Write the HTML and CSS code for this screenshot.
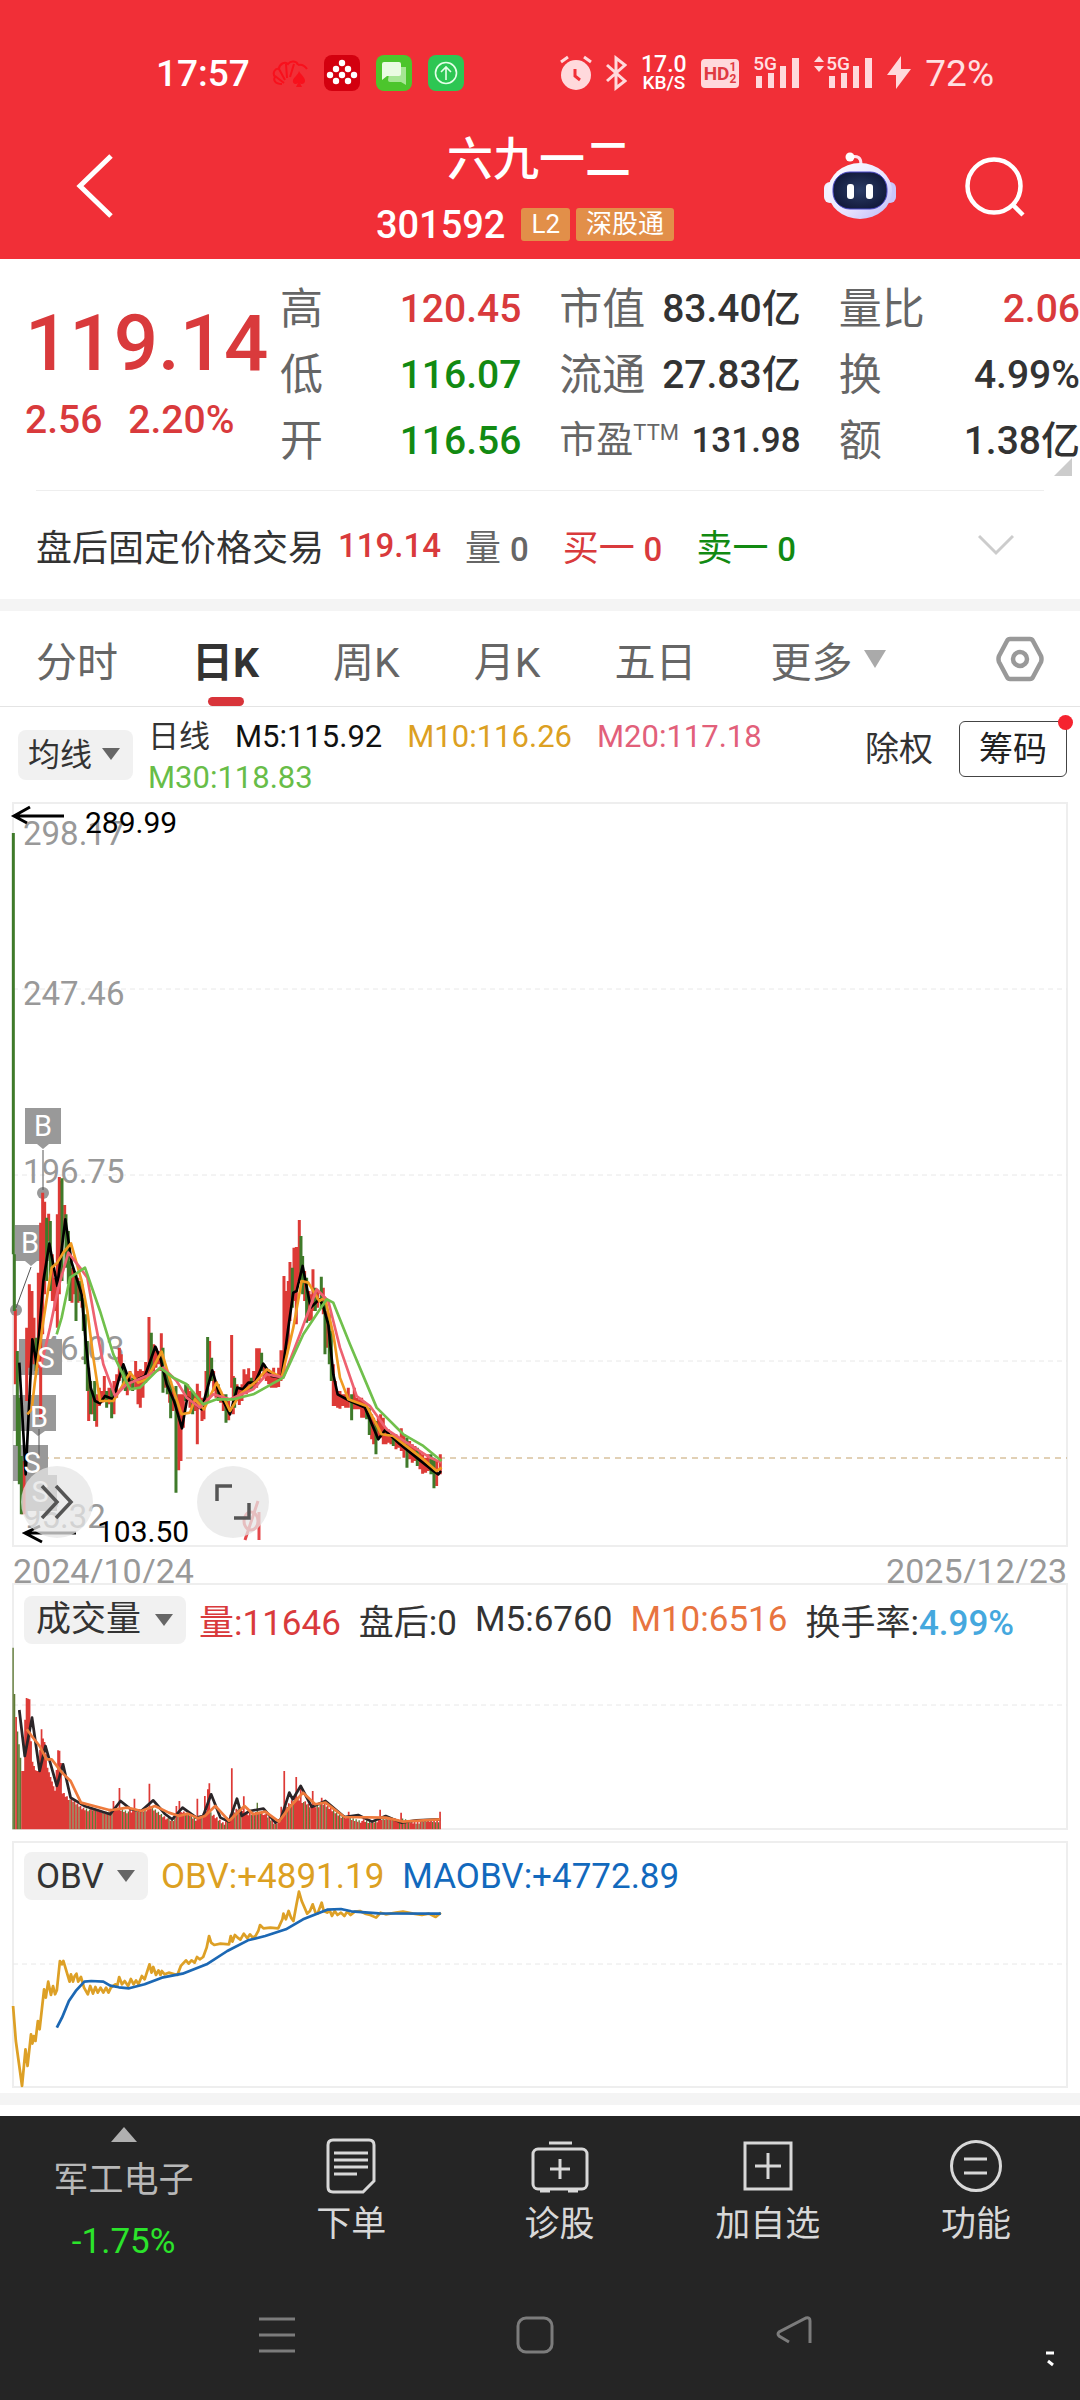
FILE: index.html
```html
<!DOCTYPE html>
<html lang="zh-CN">
<head>
    <meta charset="UTF-8">
    <meta name="viewport" content="width=device-width, initial-scale=1.0">
    <title>六九一二 301592</title>
    <link rel="stylesheet" href="styles.css">
</head>
<body>
    <div class="top">
        <div class="status-bar">
            <div class="status-left">
                <span class="clock">17:57</span>
                <svg width="36" height="36" viewBox="0 0 36 36" fill="none" stroke="#f8101c" stroke-width="2">
                    <path d="M10 29C3 29 1 25 3 22C0 18 3 13 7 14C7 9 13 6 16 9C19 5 25 6 26 10M12 28L3 21M13 25L7 14M15 23L14 9M18 22L22 9M26 10C30 9 33 11 35 14"/>
                    <path d="M27 16C29 20 33 22 33 26C33 29 29 30 28 28L30 32H24L26 28C24 30 20 29 21 25C22 22 26 20 27 16Z" fill="#f8101c" stroke="none"/>
                </svg>
                <svg width="36" height="36" viewBox="0 0 36 36">
                    <rect width="36" height="36" rx="8" fill="#d3000f"/>
                    <g fill="#fff">
                        <circle cx="18" cy="8" r="3.2"/><circle cx="12" cy="14" r="3.2"/><circle cx="24" cy="14" r="3.2"/>
                        <circle cx="6" cy="20" r="3.2"/><circle cx="18" cy="20" r="3.2"/><circle cx="30" cy="20" r="3.2"/>
                        <circle cx="12" cy="26" r="3.2"/><circle cx="24" cy="26" r="3.2"/>
                    </g>
                </svg>
                <svg width="36" height="36" viewBox="0 0 36 36">
                    <rect width="36" height="36" rx="8" fill="#4cc52c"/>
                    <path d="M14 12h16v18l-5-3H14a2 2 0 0 1-2-2z" fill="#a6e694"/>
                    <path d="M8 7h15a2 2 0 0 1 2 2v10a2 2 0 0 1-2 2H11l-5 4V9a2 2 0 0 1 2-2z" fill="#e9fbe2"/>
                </svg>
                <svg width="36" height="36" viewBox="0 0 36 36" fill="none" stroke="#e4ffe9" stroke-width="1.6">
                    <rect width="36" height="36" rx="8" fill="#2dc653" stroke="none"/>
                    <circle cx="18" cy="18" r="10.5"/>
                    <path d="M18 25V12M13 17l5-5 5 5"/>
                </svg>
            </div>
            <div class="status-right">
                <svg width="32" height="36" viewBox="0 0 32 36">
                    <circle cx="16" cy="20" r="15" fill="#ffd9dc"/>
                    <path d="M1 7L8 2M31 7L24 2" stroke="#ffd9dc" stroke-width="3"/>
                    <path d="M15 14v7l5 4" stroke="#f12f37" stroke-width="3" fill="none"/>
                </svg>
                <svg width="21" height="36" viewBox="0 0 21 36" fill="none" stroke="#ffd9dc" stroke-width="3">
                    <path d="M1 10L19 26L10 33V3L19 10L1 26"/>
                </svg>
                <span class="net-speed"><b>17.0</b><i>KB/S</i></span>
                <span class="hd">HD<span class="hd-num"><i>1</i><i>2</i></span></span>
                <span class="signal">
                    <span class="net-type">5G</span>
                    <svg width="44" height="34" viewBox="0 0 44 34" fill="#ffd9dc"><path d="M0 20h6v12H0zM12 17h6v15h-6zM24 10h6v22h-6zM36 2h7v30h-7z"/></svg>
                </span>
                <span class="signal signal-data">
                    <svg class="updown" width="10" height="16" viewBox="0 0 10 16" fill="#ffd9dc"><path d="M0 6l5-6 5 6zM0 10h10l-5 6z"/></svg>
                    <span class="net-type">5G</span>
                    <svg width="44" height="34" viewBox="0 0 44 34" fill="#ffd9dc"><path d="M0 20h6v12H0zM12 17h6v15h-6zM24 10h6v22h-6zM36 2h7v30h-7z"/></svg>
                </span>
                <svg width="24" height="34" viewBox="0 0 24 34"><path d="M14 0L0 19H9V33L24 13H14Z" fill="#ffd9dc"/></svg>
                <span class="battery">72%</span>
            </div>
        </div>

        <div class="header">
            <button class="icon-btn back" aria-label="返回">
                <svg width="38" height="66" viewBox="0 0 38 66" fill="none" stroke="#fff" stroke-width="5"><path d="M35 3L4 33L35 63"/></svg>
            </button>
            <div class="header-title">
                <h1>六九一二</h1>
                <div class="code-row">
                    <span class="code">301592</span>
                    <span class="badge">L2</span>
                    <span class="badge">深股通</span>
                </div>
            </div>
            <div class="header-actions">
                <button class="icon-btn" aria-label="助手">
                    <svg width="72" height="68" viewBox="0 0 72 68">
                        <defs>
                            <linearGradient id="shell" x1="0" y1="0" x2="1" y2="1"><stop offset="0" stop-color="#fff"/><stop offset=".6" stop-color="#e6e2ff"/><stop offset="1" stop-color="#b9b6f5"/></linearGradient>
                            <radialGradient id="face"><stop offset="0" stop-color="#2c3c66"/><stop offset="1" stop-color="#141c3e"/></radialGradient>
                        </defs>
                        <path d="M26 5C34 3 37 6 37 12" fill="none" stroke="#ffe1ee" stroke-width="3"/>
                        <circle cx="26" cy="5" r="4.5" fill="#fff"/>
                        <rect x="0" y="30" width="12" height="21" rx="6" fill="#f3f0ff"/>
                        <rect x="60" y="30" width="12" height="21" rx="6" fill="#c9c6fb"/>
                        <ellipse cx="36" cy="39" rx="32" ry="28" fill="url(#shell)"/>
                        <rect x="9" y="20" width="54" height="37" rx="17" fill="url(#face)" stroke="#4b48c8" stroke-width="1"/>
                        <rect x="23" y="32" width="7" height="15" rx="3" fill="#fff"/>
                        <rect x="42" y="32" width="7" height="15" rx="3" fill="#fff"/>
                    </svg>
                </button>
                <button class="icon-btn" aria-label="搜索">
                    <svg width="62" height="62" viewBox="0 0 62 62" fill="none" stroke="#fff" stroke-width="4.5"><circle cx="30" cy="31" r="26.500"/><path d="M48 49L59 60"/></svg>
                </button>
            </div>
        </div>
    </div>

    <div class="quote">
        <div class="quote-main">
            <div class="price up">119.14</div>
            <div class="change up"><span>2.56</span><span>2.20%</span></div>
        </div>
        <div class="quote-grid">
            <div class="cell"><span>高</span><b class="up">120.45</b></div>
            <div class="cell"><span>市值</span><b>83.40亿</b></div>
            <div class="cell"><span>量比</span><b class="up">2.06</b></div>
            <div class="cell"><span>低</span><b class="down">116.07</b></div>
            <div class="cell"><span>流通</span><b>27.83亿</b></div>
            <div class="cell"><span>换</span><b>4.99%</b></div>
            <div class="cell"><span>开</span><b class="down">116.56</b></div>
            <div class="cell cell-small"><span>市盈<sup>TTM</sup></span><b>131.98</b></div>
            <div class="cell"><span>额</span><b>1.38亿</b></div>
        </div>
        <span class="corner"></span>
    </div>

    <div class="fixed-price">
        <span>盘后固定价格交易</span>
        <b class="up">119.14</b>
        <span class="muted">量 <b>0</b></span>
        <span class="up">买一 <b>0</b></span>
        <span class="down">卖一 <b>0</b></span>
        <button class="icon-btn expand" aria-label="展开">
            <svg width="36" height="22" viewBox="0 0 36 22" fill="none" stroke="#ccc" stroke-width="3"><path d="M1 2L18 19L35 2"/></svg>
        </button>
    </div>

    <div class="band"></div>

    <div class="tabs">
        <button class="tab">分时</button>
        <button class="tab active">日K</button>
        <button class="tab">周K</button>
        <button class="tab">月K</button>
        <button class="tab">五日</button>
        <button class="tab tab-more">更多</button>
        <button class="icon-btn settings" aria-label="设置">
            <svg width="48" height="46" viewBox="0 0 48 46" fill="none" stroke="#999" stroke-width="4.500" stroke-linejoin="round"><path d="M14 3H34Q36 3 37 5L45 20Q46 23 45 26L37 41Q36 43 34 43H14Q12 43 11 41L3 26Q2 23 3 20L11 5Q12 3 14 3Z"/><circle cx="24" cy="23" r="7"/></svg>
        </button>
    </div>

    <div class="ma-bar">
        <label class="dropdown"><select aria-label="主图指标"><option>均线</option></select></label>
        <div class="ma-values">
            <span class="ma-name">日线</span>
            <span class="ma5">M5:115.92</span>
            <span class="ma10">M10:116.26</span>
            <span class="ma20">M20:117.18</span>
            <span class="ma30">M30:118.83</span>
        </div>
        <div class="ma-actions">
            <button class="text-btn">除权</button>
            <button class="chips-btn">筹码</button>
        </div>
    </div>

    <div class="panel panel-main">
        <svg class="chart" viewBox="1 0 1052 741">
            <g class="grid-lines">
                <path d="M0 185H1054M0 371H1054M0 557H1054"/>
            </g>
            <path class="last-line" d="M30 654H1054"/>
            <g class="tags">
                <path d="M12 304h36v36H36l-6 5-6-5H12zM2 421h34v36H24l-6 5-6-5H2zM6 535h43v36H6zM0 591h43v36H32l-7 5-6-5H0zM0 641h35v36H18l-6 5-6-5H0zM9 671h35v36H9z"/>
                <circle cx="30" cy="389" r="6"/>
                <circle cx="3" cy="506" r="6"/>
                <path class="tag-stem" d="M30 346V386M18 463L3 504M26 625V652"/>
            </g>
            <g class="axis-text">
                <text x="10" y="41">298.17</text>
                <text x="10" y="201">247.46</text>
                <text x="10" y="379">196.75</text>
                <text x="10" y="556">146.03</text>
                <text x="10" y="724">95.32</text>
            </g>
            <g id="candles" transform="translate(-13 277) scale(.3333)"></g>
            <g class="tag-text">
                <text x="30" y="332">B</text>
                <text x="17" y="449">B</text>
                <text x="33" y="564">S</text>
                <text x="26" y="623">B</text>
                <text x="19" y="669">S</text>
                <text x="27" y="698">S</text>
            </g>
            <g class="extremes">
                <path d="M51 12H1M17 3L1 12L14 19"/>
                <path d="M63 729H12M27 722L12 729L29 738"/>
                <text x="72" y="29">289.99</text>
                <text x="84" y="738">103.50</text>
            </g>
            <g fill="none" stroke="#e5484c" stroke-width="3">
                <path d="M246 708V736"/>
                <ellipse cx="238" cy="717" rx="7" ry="9"/>
                <path d="M232 736L245 697"/>
            </g>
        </svg>
        <button class="round-btn btn-forward" aria-label="前进">
            <svg width="34" height="36" viewBox="0 0 34 36" fill="none" stroke="#555" stroke-width="3.500"><path d="M2 2L17 18L2 34M16 2L31 18L16 34"/></svg>
        </button>
        <button class="round-btn btn-full" aria-label="全屏">
            <svg width="36" height="36" viewBox="0 0 36 36" fill="none" stroke="#555" stroke-width="3.500"><path d="M2 17V2H17M34 19V34H19"/></svg>
        </button>
    </div>

    <div class="dates"><span>2024/10/24</span><span>2025/12/23</span></div>

    <div class="panel panel-volume">
        <svg class="chart" viewBox="1 0 1052 243">
            <g class="grid-lines"><path d="M0 120H1054"/></g>
            <g id="volume" transform="translate(-13 -44) scale(.3444 .3333)"></g>
        </svg>
        <div class="toolbar">
            <label class="dropdown"><select aria-label="副图指标一"><option>成交量</option></select></label>
            <span class="up">量:11646</span>
            <span>盘后:0</span>
            <span>M5:6760</span>
            <span class="orange">M10:6516</span>
            <span>换手率:<b class="blue">4.99%</b></span>
        </div>
    </div>

    <div class="panel panel-obv">
        <svg class="chart" viewBox="1 0 1052 243">
            <g class="grid-lines"><path d="M0 121H1054"/></g>
            <g id="obv" transform="translate(-13 -22) scale(.3444 .3333)"></g>
        </svg>
        <div class="toolbar">
            <label class="dropdown"><select aria-label="副图指标二"><option>OBV</option></select></label>
            <span class="ma10">OBV:+4891.19</span>
            <span class="deep-blue">MAOBV:+4772.89</span>
        </div>
    </div>

    <div class="band"></div>

    <div class="footer">
        <div class="bottom-nav">
            <a class="nav-sector" href="#">
                <span class="tri"></span>
                <span>军工电子</span>
                <span class="sector-change">-1.75%</span>
            </a>
            <a class="nav-item" href="#">
                <svg width="50" height="56" viewBox="0 0 50 56" fill="none" stroke="#d8d8d8" stroke-width="3"><path d="M7 2H43Q48 2 48 7V43L37 54H7Q2 54 2 49V7Q2 2 7 2ZM8 15H42M8 22H42M8 29H42M8 36H31"/></svg>
                <span>下单</span>
            </a>
            <a class="nav-item" href="#">
                <svg width="58" height="56" viewBox="0 0 58 56" fill="none" stroke="#d8d8d8" stroke-width="3"><rect x="2" y="11" width="54" height="40" rx="5"/><path d="M18 5H41M29 21V41M19 31H39M9 53H19M37 53H47"/></svg>
                <span>诊股</span>
            </a>
            <a class="nav-item" href="#">
                <svg width="50" height="56" viewBox="0 0 50 56" fill="none" stroke="#d8d8d8" stroke-width="3"><path d="M2 5H48V51H2ZM25 15V41M12 28H38"/></svg>
                <span>加自选</span>
            </a>
            <a class="nav-item" href="#">
                <svg width="54" height="56" viewBox="0 0 54 56" fill="none" stroke="#d8d8d8" stroke-width="3"><circle cx="27" cy="28" r="24.500"/><path d="M15 21H38M15 35H38"/></svg>
                <span>功能</span>
            </a>
        </div>
        <div class="system-nav">
            <button class="icon-btn" aria-label="最近任务">
                <svg width="36" height="38" viewBox="0 0 36 38" stroke="#7c7c7c" stroke-width="3"><path d="M0 3H36M0 19H36M0 35H36"/></svg>
            </button>
            <button class="icon-btn" aria-label="主页">
                <svg width="38" height="38" viewBox="0 0 38 38" fill="none" stroke="#7c7c7c" stroke-width="3"><rect x="2" y="2" width="34" height="34" rx="8"/></svg>
            </button>
            <button class="icon-btn" aria-label="返回上一页">
                <svg width="38" height="38" viewBox="0 0 38 38" fill="none" stroke="#7c7c7c" stroke-width="3"><path d="M14 26L4 20Q2 18 4 16L31 2Q35 1 35 5V27"/></svg>
            </button>
            <svg class="marks" width="10" height="16" viewBox="0 0 10 16" stroke="#fff" stroke-width="3"><path d="M1 2H9M3 10L8 14"/></svg>
        </div>
    </div>

    <script src="script.js"></script>
</body>
</html>
```
FILE: styles.css
```css
* {
    margin: 0;
    padding: 0;
    box-sizing: border-box;
}

body {
    font-family: Roboto, "Noto Sans CJK SC", sans-serif;
    background: #fff;
    color: #333;
    font-size: 35px;
}

button,
select {
    font: inherit;
    color: inherit;
    background: none;
    border: none;
}

a {
    color: inherit;
    text-decoration: none;
}

i {
    font-style: normal;
}

b {
    font-weight: 500;
}

svg {
    display: block;
    flex: none;
}

.up { color: #d93a3c; }
.down { color: #128a12; }
.muted { color: #666; }
.orange { color: #e87440; }
.blue { color: #45a8de; }
.deep-blue { color: #1269bd; }
.ma5 { color: #111; }
.ma10 { color: #dca022; }
.ma20 { color: #e2607a; }
.ma30 { color: #68bd48; }

.icon-btn {
    display: flex;
}

/* header */
.top {
    background: #f12f37;
    color: #fff;
    padding-top: 48px;
}

.status-bar {
    display: flex;
    justify-content: space-between;
    align-items: center;
    height: 50px;
    padding: 0 86px 0 156px;
}

.status-left,
.status-right {
    display: flex;
    align-items: center;
    gap: 16px;
}

.status-right {
    gap: 14px;
    color: #ffe0e2;
}

.clock {
    font-size: 37px;
    font-weight: 500;
    margin-right: 6px;
}

.battery {
    font-size: 37px;
}

.net-speed {
    display: flex;
    flex-direction: column;
    align-items: center;
    font-size: 19px;
    font-weight: 500;
    line-height: 16px;
    color: #fff;
}

.net-speed b {
    font-size: 23px;
    line-height: 20px;
}

.hd {
    display: flex;
    align-items: center;
    height: 29px;
    padding: 0 3px;
    background: #ffd9dc;
    color: #e03a42;
    border-radius: 4px;
    font-size: 19px;
    font-weight: 700;
}

.hd-num {
    display: flex;
    flex-direction: column;
    font-size: 12px;
    line-height: 12px;
}

.signal {
    position: relative;
    padding-left: 3px;
}

.signal-data {
    padding-left: 15px;
}

.net-type {
    position: absolute;
    left: 0;
    top: 0;
    font-size: 19px;
    font-weight: 500;
    line-height: 16px;
}

.signal-data .net-type {
    left: 12px;
}

.updown {
    position: absolute;
    left: 0;
    top: 0;
}

.header {
    display: grid;
    grid-template-columns: 1fr auto 1fr;
    align-items: center;
    height: 161px;
    padding: 26px 54px 0 76px;
}

.back,
.header-actions {
    margin-bottom: 12px;
}

.header-title {
    text-align: center;
    margin-left: -24px;
}

.header-title h1 {
    font-size: 46px;
    font-weight: 500;
    line-height: 66px;
}

.code-row {
    display: flex;
    align-items: center;
    justify-content: center;
    gap: 6px;
    height: 66px;
    padding-right: 28px;
}

.code {
    font-size: 38px;
    font-weight: 500;
    margin-right: 10px;
}

.badge {
    height: 33px;
    padding: 0 10px;
    background: #e28f49;
    border-radius: 3px;
    font-size: 26px;
    line-height: 33px;
}

.header-actions {
    display: flex;
    align-items: center;
    justify-content: flex-end;
    gap: 68px;
}

/* quote */
.quote {
    position: relative;
    display: flex;
    padding: 17px 0 16px;
}

.quote-main {
    width: 280px;
    padding: 25px 0 0 25px;
}

.price {
    font-size: 78px;
    font-weight: 500;
    line-height: 86px;
}

.change {
    display: flex;
    gap: 26px;
    font-size: 39px;
    font-weight: 500;
    line-height: 66px;
}

.quote-grid {
    flex: 1;
    display: grid;
    grid-template-columns: repeat(3, 1fr);
    column-gap: 38px;
}

.cell {
    display: flex;
    justify-content: space-between;
    font-size: 39px;
    line-height: 66px;
    white-space: nowrap;
}

.cell span {
    color: #666;
    font-size: 43px;
}

.cell-small {
    font-size: 35px;
}

.cell-small span {
    font-size: 37px;
}

.cell sup {
    font-size: 22px;
    line-height: 22px;
}

.corner {
    position: absolute;
    right: 8px;
    bottom: 14px;
    border-left: 18px solid transparent;
    border-bottom: 18px solid #ccc;
}

.fixed-price {
    display: flex;
    align-items: center;
    height: 109px;
    margin: 0 36px;
    border-top: 1px solid #eee;
    font-size: 36px;
}

.fixed-price > * {
    margin-right: 34px;
}

.fixed-price > span:first-child {
    margin-right: 14px;
}

.fixed-price b {
    font-size: 33px;
}

.fixed-price > b {
    margin-right: 24px;
}

.fixed-price .expand {
    margin-left: auto;
    margin-right: 30px;
}

.band {
    height: 12px;
    background: #f4f4f4;
}

/* tabs */
.tabs {
    display: flex;
    align-items: center;
    gap: 74px;
    height: 96px;
    padding: 0 36px;
    border-bottom: 1px solid #e4e4e4;
    font-size: 41px;
}

.tab {
    position: relative;
    height: 95px;
    color: #666;
    white-space: nowrap;
}

.tab.active {
    color: #333;
    font-weight: 700;
}

.tab.active::after {
    content: "";
    position: absolute;
    left: 50%;
    bottom: 0;
    width: 36px;
    height: 9px;
    margin-left: -18px;
    border-radius: 5px;
    background: #d8343a;
}

.tab-more {
    display: flex;
    align-items: center;
    gap: 11px;
}

.tab-more::after {
    content: "";
    border: 11px solid transparent;
    border-top: 18px solid #aaa;
    border-bottom: none;
}

.settings {
    margin-left: auto;
}

/* moving averages */
.ma-bar {
    display: flex;
    align-items: center;
    height: 95px;
    padding: 0 13px 0 18px;
}

.dropdown {
    position: relative;
    background: #f1f1f1;
    border-radius: 8px;
    flex: none;
}

.dropdown::after {
    content: "";
    position: absolute;
    right: 13px;
    top: 18px;
    border: 9px solid transparent;
    border-top: 12px solid #666;
    border-bottom: none;
    pointer-events: none;
}

.dropdown select {
    display: block;
    appearance: none;
    height: 48px;
    padding: 0 44px 0 12px;
}

.ma-bar .dropdown select {
    height: 50px;
    padding: 0 40px 0 10px;
    font-size: 32px;
}

.ma-values {
    flex: 1;
    display: flex;
    flex-wrap: wrap;
    column-gap: 25px;
    margin-left: 15px;
    padding-top: 4px;
    font-size: 31px;
    line-height: 41px;
}

.ma-actions {
    display: flex;
    align-items: center;
    gap: 26px;
    padding-bottom: 12px;
    font-size: 34px;
    line-height: 50px;
}

.chips-btn {
    position: relative;
    width: 108px;
    height: 56px;
    border: 1px solid #444;
    border-radius: 6px;
    color: #222;
}

.chips-btn::after {
    content: "";
    position: absolute;
    top: -7px;
    right: -7px;
    width: 15px;
    height: 15px;
    border-radius: 50%;
    background: #f5232f;
}

/* charts */
.panel {
    position: relative;
    display: grid;
    margin: 0 12px;
    border: 2px solid #eee;
}

.chart {
    grid-area: 1 / 1;
    width: 100%;
    height: auto;
    overflow: visible;
}

.panel-volume,
.panel-obv {
    align-items: start;
}

.toolbar {
    grid-area: 1 / 1;
    display: flex;
    align-items: center;
    gap: 18px;
    padding: 9px 0 0 10px;
    white-space: nowrap;
}

.toolbar .dropdown {
    margin-right: -5px;
}

.grid-lines path {
    stroke: #e8e8e8;
    stroke-width: 1;
    stroke-dasharray: 5 4;
}

.last-line {
    stroke: #c4a26c;
    stroke-width: 1;
    stroke-dasharray: 6 5;
}

.tags {
    fill: #999;
}

.tag-stem {
    fill: none;
    stroke: #555;
    stroke-width: 1;
}

.axis-text {
    font-size: 33px;
    fill: #999;
}

.tag-text {
    font-size: 29px;
    fill: #fff;
    text-anchor: middle;
}

.extremes path {
    fill: none;
    stroke: #000;
    stroke-width: 3;
}

.extremes text {
    font-size: 30px;
    fill: #000;
}

.line {
    fill: none;
    stroke-width: 8;
    stroke-linejoin: round;
}

.round-btn {
    position: absolute;
    bottom: 7px;
    display: flex;
    align-items: center;
    justify-content: center;
    width: 72px;
    height: 72px;
    border-radius: 50%;
    background: rgba(230, 230, 230, 0.75);
}

.btn-forward {
    left: 7px;
}

.btn-full {
    left: 183px;
}

.dates {
    display: flex;
    justify-content: space-between;
    height: 36px;
    margin: 0 13px;
    font-size: 34px;
    line-height: 48px;
    color: #999;
}

.panel-volume {
    margin-bottom: 11px;
}

.panel-obv {
    margin-bottom: 5px;
}

/* footer */
.footer {
    margin-top: 11px;
    background: #252525;
    color: #d8d8d8;
}

.bottom-nav {
    display: grid;
    grid-template-columns: 247fr 208fr 208fr 208fr 208fr;
    height: 175px;
    font-size: 35px;
}

.nav-sector,
.nav-item {
    display: flex;
    flex-direction: column;
    align-items: center;
}

.nav-sector {
    padding-top: 11px;
    color: #b8b8b8;
    line-height: 61px;
}

.nav-sector .sector-change {
    color: #2be42b;
}

.tri {
    border: 13px solid transparent;
    border-bottom: 15px solid #b0b0b0;
    border-top: none;
    margin-bottom: 8px;
}

.nav-item {
    padding-top: 22px;
    line-height: 62px;
}

.system-nav {
    position: relative;
    display: flex;
    gap: 221px;
    height: 110px;
    padding: 25px 0 0 259px;
}

.marks {
    position: absolute;
    right: 25px;
    top: 60px;
}
```
FILE: script.js
```js
const RED = '#dd3a36';
const GREEN = '#3f7a2a';
const NS = 'http://www.w3.org/2000/svg';

// x high low, one entry per bar
const downBars = `40 -744 520,43 520 690,52 810 1095,58 950 1210,64 1125 1300,108 770 870,140 410 600,151 420 630,
186 292 600,198 400 560,205 450 610,210 540 660,228 580 720,240 600 660,250 650 750,256 700 850,262 780 930,272 900 1000,284 900 1020,
320 930 980,335 920 1012,370 860 920,376 870 930,398 890 930,454 755 880,489 800 935,502 880 940,512 900 1012,
528 915 1235,557 910 960,578 930 1000,623 768 950,635 830 900,655 910 960,678 940 1025,704 890 980,754 890 930,
785 815 870,877 560 680,903 465 600,908 525 640,920 590 725,946 620 690,964 587 680,975 660 820,988 700 850,
994 750 900,1055 940 1018,1100 970 1015,1108 980 1062,1128 1020 1120,1180 1060 1095,1221 1070 1160,1252 1100 1155,
1293 1120 1180,1302 1130 1222`;

const upBars = `46 685 910,72 1180 1300,68 1140 1300,80 740 960,88 610 860,96 630 830,102 710 850,115 575 860,122 425 1015,
128 335 760,134 362 640,146 398 480,157 520 660,165 590 690,172 400 740,178 288 640,182 300 560,194 372 440,216 560 665,222 570 640,
234 590 665,246 610 680,266 860 1020,278 930 1000,290 940 1037,298 920 975,306 930 965,313 885 960,327 920 970,
342 900 1000,350 880 950,358 800 900,364 820 890,382 880 943,390 870 920,407 840 920,414 870 970,421 865 980,
429 870 950,437 843 905,447 708 880,461 790 870,468 800 860,475 810 850,484 757 870,495 860 920,509 890 965,
519 920 990,536 940 1168,543 940 1140,550 940 1040,563 910 960,570 930 980,585 940 990,592 908 1090,599 930 980,
606 950 1020,612 960 1015,618 870 960,629 780 900,641 870 930,648 900 950,662 930 965,670 940 990,686 960 1018,
695 762 920,700 885 1000,711 910 960,718 920 972,726 910 960,732 865 930,739 880 940,746 862 930,761 870 920,770 802 920,778 802 900,
792 850 890,799 860 900,806 865 910,814 870 920,821 860 920,828 880 920,836 860 918,843 808 900,852 585 880,
860 630 820,865 600 800,870 543 720,882 500 660,889 498 730,898 417 600,914 570 660,927 630 720,934 640 718,
939 565 690,953 630 680,970 620 700,981 690 800,1000 850 975,1006 900 975,1013 930 980,1020 930 983,1028 940 975,
1037 940 980,1045 920 980,1063 920 985,1070 950 985,1078 955 985,1085 950 1010,1092 960 1010,1115 1000 1075,
1121 1010 1090,1135 1010 1075,1142 1000 1070,1150 1010 1090,1158 1040 1090,1165 1045 1085,1173 1060 1090,
1188 1060 1105,1195 1070 1100,1204 1042 1110,1212 1060 1130,1229 1080 1135,1237 1090 1145,1245 1095 1140,
1260 1110 1165,1268 1120 1178,1277 1130 1175,1285 1120 1170,1310 1140 1215,1321 1120 1180`;

const candleLines = [
    ['#000', '58 845,77 1180,97 775,110 850,130 600,148 488,172 615,196 415,215 545,245 640,258 790,272 920,285 960,300 967,315 945,340 955,358 890,370 850,390 905,435 885,466 797,482 835,500 910,522 960,546 1042,562 950,575 960,605 985,620 930,637 868,655 930,690 1000,712 920,728 925,745 905,765 905,790 848,815 885,845 890,865 740,880 635,890 630,908 555,932 680,958 655,968 670,985 730,1000 880,1013 940,1050 960,1095 980,1135 1075,1155 1048,1200 1090,1250 1130,1300 1170,1315 1180,1323 1170'],
    ['#f09a20', '82 1000,95 985,105 900,130 720,155 560,172 545,190 515,213 487,245 600,262 690,280 830,300 960,340 960,370 910,390 875,415 905,440 895,485 812,510 895,545 1000,570 995,585 955,612 985,650 905,690 990,720 940,770 900,800 865,845 890,880 740,905 600,925 605,958 660,975 650,1000 760,1020 890,1045 955,1100 975,1145 1060,1180 1065,1225 1100,1270 1135,1310 1170,1325 1160'],
    ['#ee6170', '122 860,150 740,175 620,205 515,240 560,262 590,285 720,310 850,345 945,380 910,440 885,490 860,530 900,560 950,600 980,640 940,690 955,760 925,800 880,850 890,900 760,950 625,985 660,1020 800,1070 945,1110 975,1160 1045,1220 1085,1290 1130,1325 1145'],
    ['#70c04c', '170 760,185 710,210 590,255 560,300 690,340 820,390 925,420 920,480 860,520 890,560 910,610 970,650 955,700 955,760 940,850 890,910 760,980 655,1000 665,1050 790,1130 980,1210 1060,1270 1095,1325 1140']
];

const volumeTops = '38 320,43 480,48 545,56 615,64 690,70 690,74 470,86 475,92 655,104 690,114 690,119 552,124 590,130 605,138 680,160 750,168 628,176 630,180 750,205 775,240 800,310 812,340 800,380 812,440 800,500 840,530 808,570 835,600 808,650 845,690 800,720 820,760 810,800 848,830 800,860 765,900 795,940 790,1000 828,1070 842,1130 830,1200 842,1282 835';
const volumeSpikes = { 330: 780, 346: 741, 392: 773, 433: 728, 512: 795, 521: 780, 573: 773, 595: 765, 603: 745, 608: 727, 673: 682, 708: 766, 747: 785, 817: 797, 825: 690, 860: 708, 872: 740, 908: 750, 933: 770, 1012: 812, 1104: 806, 1165: 815, 1279: 812 };

const volumeLines = [
    ['#2b2528', '56 507,72 645,93 530,115 690,132 615,165 735,183 670,205 770,245 795,320 820,350 780,380 805,410 810,445 778,480 820,500 835,530 800,570 830,590 825,613 760,640 830,665 842,688 773,702 825,725 810,765 803,800 845,815 835,840 755,850 775,873 735,905 798,945 780,1000 828,1040 822,1080 842,1120 825,1165 845,1210 838,1278 835'],
    ['#ee7a3c', '78 565,92 585,115 615,135 655,150 655,180 695,205 720,235 785,320 808,370 800,410 810,450 795,490 815,520 825,545 818,575 832,595 825,625 795,665 840,710 795,735 820,770 812,810 842,840 800,880 755,915 790,945 785,1000 828,1120 830,1170 842,1278 835']
];

const obvLines = [
    ['#dda026', '38 555,46 660,64 795,74 685,80 735,90 640,94 668,98 645,103 660,110 600,115 625,128 505,133 530,140 482,148 522,154 495,160 520,165 508,174 420,180 430,184 420,202 482,206 460,212 482,217 465,222 458,227 482,235 468,244 500,255 520,262 495,270 518,277 498,284 515,292 500,300 515,308 500,315 515,322 500,335 490,341 492,346 468,354 490,362 480,372 495,380 474,388 490,395 478,402 490,412 465,420 475,434 430,440 455,445 438,453 462,460 448,466 462,470 450,478 460,490 455,515 462,525 435,540 418,548 428,556 418,565 425,572 408,580 415,590 408,600 380,607 345,613 365,622 372,640 368,665 370,670 345,675 362,682 342,690 350,698 356,708 338,718 352,726 340,734 350,742 345,750 330,755 312,765 322,785 320,808 322,820 295,823 278,830 295,838 270,845 290,852 300,860 255,868 212,876 240,892 278,900 270,908 250,916 275,922 278,934 245,940 270,950 275,958 270,964 285,972 270,980 282,990 275,1000 285,1008 272,1018 282,1030 272,1045 270,1060 278,1075 282,1092 290,1105 275,1120 280,1150 275,1170 272,1200 278,1225 282,1245 278,1265 288,1280 275'],
    ['#1c68b4', '165 620,180 590,200 540,220 510,245 482,265 480,300 482,320 494,345 499,375 502,420 490,470 470,530 458,600 430,660 390,720 358,770 345,830 325,880 295,950 266,990 264,1020 271,1100 277,1280 278']
];

function addPath(parent, d, attrs) {
    const path = document.createElementNS(NS, 'path');
    path.setAttribute('d', d);
    Object.entries(attrs).forEach(([key, value]) => path.setAttribute(key, value));
    parent.appendChild(path);
}

function parse(list) {
    return list.split(',').map(item => item.trim().split(' ').map(Number));
}

function drawLines(parent, lines) {
    lines.forEach(([color, points]) => {
        addPath(parent, 'M' + points.replace(/,/g, 'L'), { class: 'line', stroke: color });
    });
}

function drawCandles() {
    const group = document.getElementById('candles');
    [[upBars, RED], [downBars, GREEN]].forEach(([bars, color]) => {
        const d = parse(bars).map(([x, high, low]) => `M${x} ${high}V${low}`).join('');
        addPath(group, d, { stroke: color, 'stroke-width': 9 });
    });
    drawLines(group, candleLines);
}

function drawVolume() {
    const group = document.getElementById('volume');
    const tops = parse(volumeTops);
    let up = '';
    let down = '';
    let seg = 0;

    for (let i = 0; i < 286; i++) {
        const x = 38 + i * 4.35;
        while (seg < tops.length - 2 && x > tops[seg + 1][0]) seg++;
        const [x1, y1] = tops[seg];
        const [x2, y2] = tops[seg + 1];
        let y = y1 + (y2 - y1) * (x - x1) / (x2 - x1);
        if (x > 180) y = Math.min(y + (i * 7) % 13 - 4, 856);
        Object.entries(volumeSpikes).forEach(([sx, sy]) => {
            if (Math.abs(sx - x) < 2.2) y = sy;
        });
        const bar = `M${x} ${y}V865`;
        if (x < 44 || (x > 48 && x < 64) || (x > 185 && (i * 5) % 11 < 4 && y > 770)) down += bar;
        else up += bar;
    }

    addPath(group, down, { stroke: '#5f7a35', 'stroke-width': 4 });
    addPath(group, up, { stroke: RED, 'stroke-width': 5 });
    drawLines(group, volumeLines);
}

drawCandles();
drawVolume();
drawLines(document.getElementById('obv'), obvLines);
```
